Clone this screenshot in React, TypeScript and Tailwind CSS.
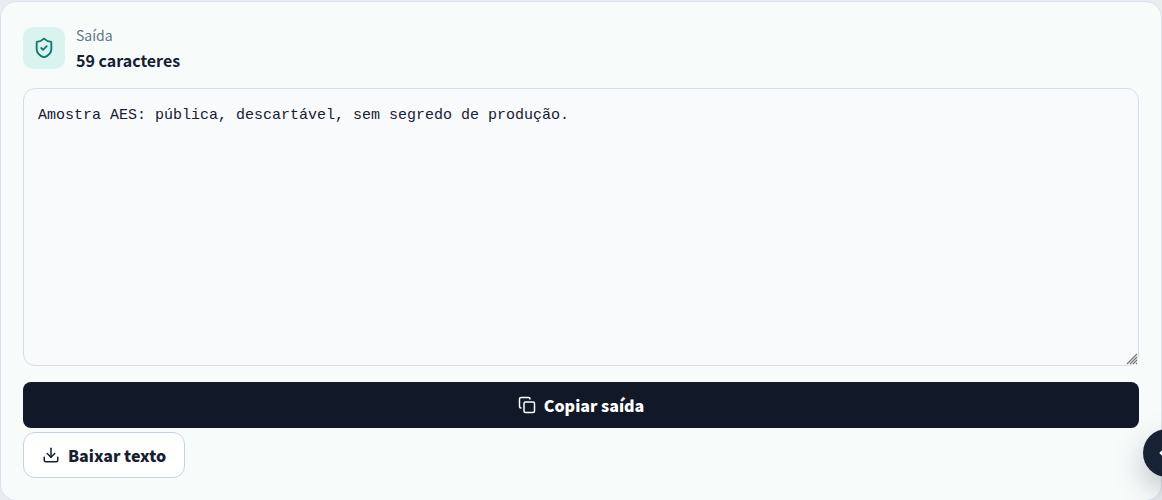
import React from 'react';
import { Copy, Download, MoveLeft, ShieldCheck } from 'lucide-react';

const OUTPUT = 'Amostra AES: pública, descartável, sem segredo de produção.';

export default function App() {
  return (
    <div className="min-h-screen overflow-hidden bg-[#e8edef] pt-px font-['Noto_Sans_CJK_SC',sans-serif] text-[#172033]">
      <section className="rounded-2xl border border-[#d9e2f0] bg-[#f7fcfb] px-[22px] pt-[21px] pb-[22px]">
        <header className="mb-[15px] flex items-center gap-[11px]">
          <span className="flex size-[42px] items-center justify-center rounded-[10px] bg-[#d9f4ee] text-[#0f766e]">
            <ShieldCheck size={22} />
          </span>
          <div>
            <label htmlFor="output" className="block text-sm leading-6 text-[#64748b]">Saída</label>
            <strong className="block text-base leading-[26px] font-bold">{OUTPUT.length} caracteres</strong>
          </div>
        </header>

        <div className="relative">
          <textarea
            id="output"
            readOnly
            defaultValue={OUTPUT}
            className="block h-[278px] w-full resize-none rounded-xl border border-[#d3deea] bg-[#f9fafc] p-3.5 font-['Liberation_Mono',monospace] text-[15px] leading-[26px] text-[#172033] outline-none"
          />
          {/* Resize grip */}
          <svg className="pointer-events-none absolute right-px bottom-px" width="12" height="12" viewBox="0 0 12 12" stroke="#777" strokeWidth="1.2">
            <path d="M1 11 11 1M4 11 11 4M7 11 11 7M10 11 11 10" />
          </svg>
        </div>

        <button type="button" className="mt-4 flex h-[46px] w-full items-center justify-center gap-2 rounded-lg bg-[#111827] text-base font-black text-white">
          <Copy size={18} />
          Copiar saída
        </button>
        <button type="button" className="mt-1 flex h-[46px] items-center gap-2 rounded-xl border border-[#c5d2e2] bg-white px-[18px] text-base font-black">
          <Download size={18} />
          Baixar texto
        </button>
      </section>

      {/* Drawer toggle, tucked into the window edge */}
      <button
        type="button"
        aria-label="Abrir painel"
        className="fixed -right-[29px] bottom-[23px] flex size-12 items-center justify-center rounded-full bg-[#172334] text-white shadow-[0_12px_30px_rgba(15,23,42,0.25)]"
      >
        <MoveLeft size={16} />
      </button>
    </div>
  );
}
